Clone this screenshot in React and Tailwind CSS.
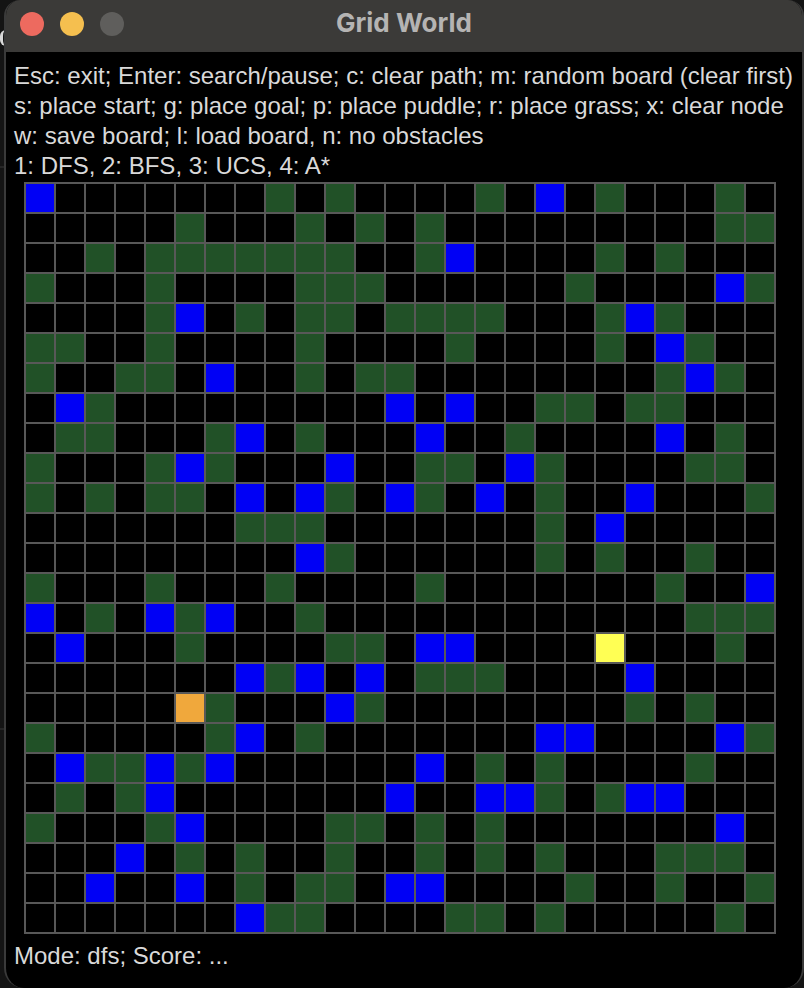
import React from "react";

// One string per board row: kind letter followed by the column it occupies.
// B = puddle, G = grass, Y = goal, O = start.
const BOARD = [
  "B0 G8 G10 G15 B17 G19 G23",
  "G5 G9 G11 G13 G23 G24",
  "G2 G4 G5 G6 G7 G8 G9 G10 G13 B14 G19 G21",
  "G0 G4 G9 G10 G11 G18 B23 G24",
  "G4 B5 G7 G9 G10 G12 G13 G14 G15 G19 B20 G21",
  "G0 G1 G4 G9 G14 G19 B21 G22",
  "G0 G3 G4 B6 G9 G11 G12 G21 B22 G23",
  "B1 G2 B12 B14 G17 G18 G20 G21",
  "G1 G2 G6 B7 G9 B13 G16 B21 G23",
  "G0 G4 B5 G6 B10 G13 G14 B16 G17 G22 G23",
  "G0 G2 G4 G5 B7 B9 G10 B12 G13 B15 G17 B20 G24",
  "G7 G8 G9 G17 B19",
  "B9 G10 G17 G19 G22",
  "G0 G4 G8 G13 G21 B24",
  "B0 G2 B4 G5 B6 G9 G22 G23 G24",
  "B1 G5 G10 G11 B13 B14 Y19 G23",
  "B7 G8 B9 B11 G13 G14 G15 B20",
  "O5 G6 B10 G11 G20 G22",
  "G0 G6 B7 G9 B17 B18 B23 G24",
  "B1 G2 G3 B4 G5 B6 B13 G15 G17 G22",
  "G1 G3 B4 B12 B15 B16 G17 G19 B20 B21",
  "G0 G4 B5 G10 G11 G13 G15 B23",
  "B3 G5 G7 G10 G13 G15 G17 G21 G22 G23",
  "B2 B5 G7 G9 G10 B12 B13 G18 G21 G24",
  "B7 G8 G9 G14 G15 G17 G23",
];

const COLUMNS = 25;

const FILL = {
  B: "bg-[#0000f5]",
  G: "bg-[#215127]",
  Y: "bg-[#ffff54]",
  O: "bg-[#f0a83c]",
};

const HELP = [
  "Esc: exit; Enter: search/pause; c: clear path; m: random board (clear first)",
  "s: place start; g: place goal; p: place puddle; r: place grass; x: clear node",
  "w: save board; l: load board, n: no obstacles",
  "1: DFS, 2: BFS, 3: UCS, 4: A*",
];

function TitleBar() {
  return (
    <header className="grid h-[52px] grid-cols-[1fr_auto_1fr] items-start bg-[#3b3a38] px-3">
      <div className="flex gap-4 pt-3 pl-0.5">
        <button aria-label="Close" className="size-6 rounded-full bg-[#ed6a5f]" />
        <button aria-label="Minimize" className="size-6 rounded-full bg-[#f5bf4f]" />
        <button aria-label="Zoom" disabled className="size-6 rounded-full bg-[#5f5e5c]" />
      </div>
      <h1 className="pt-2 font-['Inter',sans-serif] text-[26px] leading-[30px] font-bold text-[#b5b4b3]">
        Grid World
      </h1>
    </header>
  );
}

function Board() {
  return (
    <div className="ml-[18px] mr-[26px] grid grid-cols-[repeat(25,minmax(0,1fr))] gap-0.5 bg-[#585858] p-0.5">
      {BOARD.map((row, y) => {
        const kinds = {};
        row.split(" ").forEach((item) => {
          kinds[item.slice(1)] = item[0];
        });
        return Array.from({ length: COLUMNS }, (_, x) => (
          <div key={`${x}-${y}`} className={`aspect-square ${FILL[kinds[x]] || "bg-black"}`} />
        ));
      })}
    </div>
  );
}

export default function App() {
  return (
    <div className="relative min-h-screen overflow-hidden bg-[#141414] pl-1 font-['Liberation_Sans',Arial,sans-serif]">
      <span className="absolute top-[30px] left-0 h-4 w-3 rounded-full border-l-[3px] border-[#d8d8d8]" />
      <span className="absolute top-[166px] left-0 h-0.5 w-1 bg-[#262626]" />
      <span className="absolute top-[728px] left-0 h-0.5 w-1 bg-[#262626]" />
      <main className="relative flex min-h-screen flex-col overflow-hidden rounded-t-[16px] rounded-b-[20px] border-x-2 border-[#3a3a3a] bg-black">
        <TitleBar />
        <div className="px-2 pt-[9px] pb-[1px] text-[24px] leading-[30px] whitespace-nowrap text-[#d9d9d9]">
          {HELP.map((line) => (
            <p key={line}>{line}</p>
          ))}
        </div>
        <Board />
        <p className="px-2 pt-[7px] text-[24px] leading-[30px] text-[#d9d9d9]">
          Mode: dfs; Score: ...
        </p>
      </main>
    </div>
  );
}
